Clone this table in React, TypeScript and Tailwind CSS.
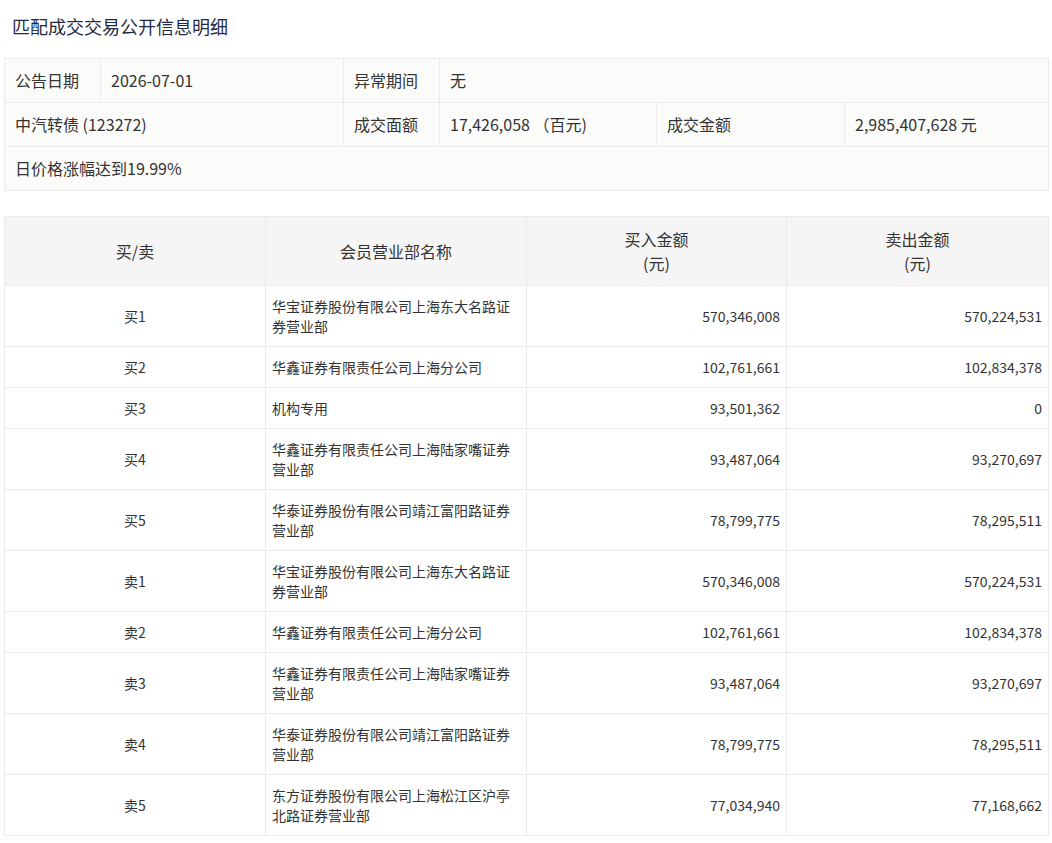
import React from 'react'

const rows = [
  { side: '买1', name: '华宝证券股份有限公司上海东大名路证券营业部', buy: '570,346,008', sell: '570,224,531' },
  { side: '买2', name: '华鑫证券有限责任公司上海分公司', buy: '102,761,661', sell: '102,834,378' },
  { side: '买3', name: '机构专用', buy: '93,501,362', sell: '0' },
  { side: '买4', name: '华鑫证券有限责任公司上海陆家嘴证券营业部', buy: '93,487,064', sell: '93,270,697' },
  { side: '买5', name: '华泰证券股份有限公司靖江富阳路证券营业部', buy: '78,799,775', sell: '78,295,511' },
  { side: '卖1', name: '华宝证券股份有限公司上海东大名路证券营业部', buy: '570,346,008', sell: '570,224,531' },
  { side: '卖2', name: '华鑫证券有限责任公司上海分公司', buy: '102,761,661', sell: '102,834,378' },
  { side: '卖3', name: '华鑫证券有限责任公司上海陆家嘴证券营业部', buy: '93,487,064', sell: '93,270,697' },
  { side: '卖4', name: '华泰证券股份有限公司靖江富阳路证券营业部', buy: '78,799,775', sell: '78,295,511' },
  { side: '卖5', name: '东方证券股份有限公司上海松江区沪亭北路证券营业部', buy: '77,034,940', sell: '77,168,662' },
]

const cell = 'border border-[#ebebeb] px-[10px] py-[10px] text-left font-normal'
const td = 'border border-[#ebebeb] px-[6px] py-[10px]'
const th = 'border border-[#ebebeb] px-[6px] py-[10px] font-normal'

export default function App() {
  return (
    <div className="bg-white min-h-screen text-[#333] font-['Microsoft_YaHei','Noto_Sans_CJK_SC',sans-serif]">
      <h2 className="pl-3 pt-[14px] pb-[20px] text-[18px] leading-[24px] text-[#1f2a44] font-normal">
        匹配成交交易公开信息明细
      </h2>

      {/* 概要 */}
      <table className="mx-1 w-[1044px] table-fixed border-collapse bg-[#fbfbf9] text-[16px] leading-[23px]">
        <colgroup>
          <col className="w-[96px]" />
          <col className="w-[243px]" />
          <col className="w-[96px]" />
          <col className="w-[217px]" />
          <col className="w-[188px]" />
          <col className="w-[204px]" />
        </colgroup>
        <tbody>
          <tr>
            <td className={cell}>公告日期</td>
            <td className={cell}>2026-07-01</td>
            <td className={cell}>异常期间</td>
            <td className={cell} colSpan={3}>无</td>
          </tr>
          <tr>
            <td className={`${cell} py-[10.5px]`} colSpan={2}>中汽转债 (123272)</td>
            <td className={`${cell} py-[10.5px]`}>成交面额</td>
            <td className={`${cell} py-[10.5px]`}>17,426,058 （百元)</td>
            <td className={`${cell} py-[10.5px]`}>成交金额</td>
            <td className={`${cell} py-[10.5px]`}>2,985,407,628 元</td>
          </tr>
          <tr>
            <td className={cell} colSpan={6}>日价格涨幅达到19.99%</td>
          </tr>
        </tbody>
      </table>

      {/* 明细 */}
      <table className="mx-1 mt-[25px] w-[1044px] table-fixed border-collapse text-[14px] leading-[20px]">
        <colgroup>
          <col className="w-[261px]" />
          <col className="w-[261px]" />
          <col className="w-[260px]" />
          <col className="w-[262px]" />
        </colgroup>
        <thead>
          <tr className="bg-[#f5f5f5] text-[16px] leading-[24px]">
            <th className={th}>买/卖</th>
            <th className={th}>会员营业部名称</th>
            <th className={th}>
              买入金额<br />(元)
            </th>
            <th className={th}>
              卖出金额<br />(元)
            </th>
          </tr>
        </thead>
        <tbody>
          {rows.map((r) => (
            <tr key={r.side}>
              <td className={`${td} text-center`}>{r.side}</td>
              <td className={`${td} text-left`}>{r.name}</td>
              <td className={`${td} text-right`}>{r.buy}</td>
              <td className={`${td} text-right`}>{r.sell}</td>
            </tr>
          ))}
        </tbody>
      </table>
    </div>
  )
}
